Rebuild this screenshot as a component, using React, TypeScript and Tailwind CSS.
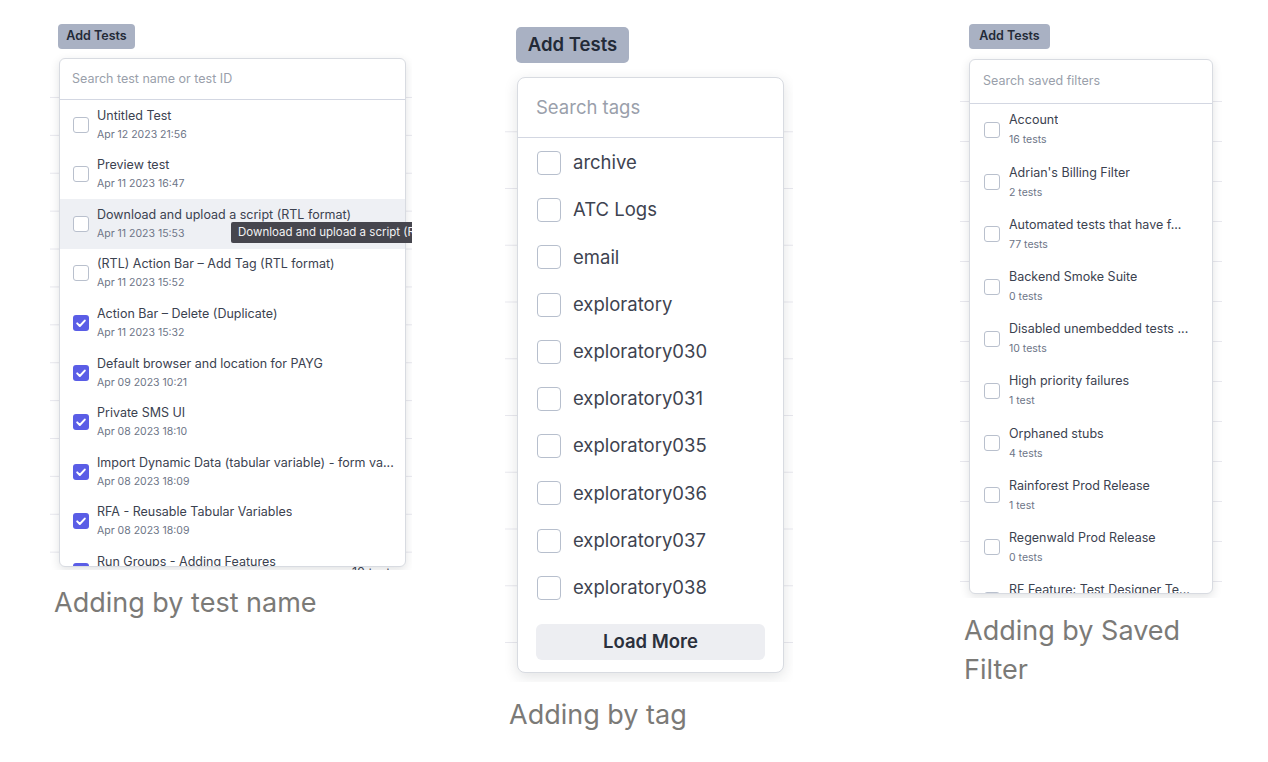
import React from 'react';

// Three screenshots of the "Add Tests" dropdown, each with a caption below.

type TestRow = { title: string; date: string; checked?: boolean; hover?: boolean };

const testRows: TestRow[] = [
  { title: 'Untitled Test', date: 'Apr 12 2023 21:56' },
  { title: 'Preview test', date: 'Apr 11 2023 16:47' },
  { title: 'Download and upload a script (RTL format)', date: 'Apr 11 2023 15:53', hover: true },
  { title: '(RTL) Action Bar – Add Tag (RTL format)', date: 'Apr 11 2023 15:52' },
  { title: 'Action Bar – Delete (Duplicate)', date: 'Apr 11 2023 15:32', checked: true },
  { title: 'Default browser and location for PAYG', date: 'Apr 09 2023 10:21', checked: true },
  { title: 'Private SMS UI', date: 'Apr 08 2023 18:10', checked: true },
  { title: 'Import Dynamic Data (tabular variable) - form va...', date: 'Apr 08 2023 18:09', checked: true },
  { title: 'RFA - Reusable Tabular Variables', date: 'Apr 08 2023 18:09', checked: true },
  { title: 'Run Groups - Adding Features', date: 'Apr 08 2023 18:05', checked: true },
];

const tags = [
  'archive',
  'ATC Logs',
  'email',
  'exploratory',
  'exploratory030',
  'exploratory031',
  'exploratory035',
  'exploratory036',
  'exploratory037',
  'exploratory038',
];

const savedFilters = [
  { title: 'Account', count: '16 tests' },
  { title: "Adrian's Billing Filter", count: '2 tests' },
  { title: 'Automated tests that have f...', count: '77 tests' },
  { title: 'Backend Smoke Suite', count: '0 tests' },
  { title: 'Disabled unembedded tests ...', count: '10 tests' },
  { title: 'High priority failures', count: '1 test' },
  { title: 'Orphaned stubs', count: '4 tests' },
  { title: 'Rainforest Prod Release', count: '1 test' },
  { title: 'Regenwald Prod Release', count: '0 tests' },
  { title: 'RF Feature: Test Designer Te...', count: '3 tests' },
];

function Check() {
  return (
    <svg viewBox="0 0 16 16" className="h-full w-full" fill="none">
      <path d="M4.2 8.4l2.6 2.6 5-5.4" stroke="#fff" strokeWidth="2" strokeLinecap="round" strokeLinejoin="round" />
    </svg>
  );
}

function SmallBox({ checked }: { checked?: boolean }) {
  if (checked) {
    return (
      <div className="h-[16px] w-[16px] shrink-0 rounded-[3px] bg-[#5a5de6]">
        <Check />
      </div>
    );
  }
  return <div className="h-[16px] w-[16px] shrink-0 rounded-[3px] border border-[#b9c0cd] bg-white" />;
}

function Caption({ children }: { children: React.ReactNode }) {
  return <p className="mt-[13px] pl-[4px] text-[27px] leading-[39px] text-[#7b7a77]">{children}</p>;
}

function TestNamePanel() {
  return (
    <div className="relative h-[555px] w-[362px] overflow-hidden bg-white [background-image:linear-gradient(#fff,#fff),linear-gradient(to_bottom,#e8e8ee_1px,transparent_1px)] [background-size:100%_81px,100%_37.9px] [background-position:0_0,0_6.2px] [background-repeat:no-repeat,repeat]">
      <div className="pl-[8px] pt-[7px]">
        <button className="h-[25px] w-[77px] rounded-[4px] bg-[#a9b1c3] text-[12.5px] font-semibold text-[#232a37]">
          Add Tests
        </button>
      </div>

      <div className="ml-[9px] mt-[9px] h-[509px] w-[347px] overflow-hidden rounded-[6px] border border-[#d8dbe1] bg-white shadow-[0_3px_10px_rgba(30,35,50,0.13)]">
        <div className="flex h-[41px] items-center border-b border-[#d3d7e2] pl-[12px] text-[12.5px] text-[#9a9fab]">
          Search test name or test ID
        </div>
        {testRows.map((row) => (
          <div
            key={row.title}
            className={`flex h-[49.6px] items-center gap-[8px] pl-[13px] ${row.hover ? 'bg-[#eef0f4]' : ''}`}
          >
            <SmallBox checked={row.checked} />
            <div className="min-w-0">
              <div className="truncate text-[12.5px] leading-[16px] text-[#3b4250]">{row.title}</div>
              <div className="mt-[4px] text-[10.5px] leading-[14px] text-[#6d7587]">{row.date}</div>
            </div>
          </div>
        ))}
      </div>
      <div className="-mt-[2px] pl-[302px] text-[12.5px] leading-[16px] text-[#3b4250]">10 tests</div>

      {/* hover tooltip, cut off by the screenshot edge */}
      <div className="absolute left-[181px] top-[207px] flex h-[21px] items-center whitespace-nowrap rounded-[2px] bg-[#46464e] px-[7px] text-[11.5px] text-[#f2f2f4]">
        Download and upload a script (RTL format)
      </div>
    </div>
  );
}

function TagPanel() {
  return (
    <div className="h-[662px] w-[288px] overflow-hidden bg-white [background-image:linear-gradient(#fff,#fff),linear-gradient(to_bottom,#e8e8ee_1px,transparent_1px)] [background-size:100%_110px,100%_56.75px] [background-position:0_0,0_54.5px] [background-repeat:no-repeat,repeat]">
      <div className="pl-[11px] pt-[7px]">
        <button className="h-[36px] w-[113px] rounded-[5px] bg-[#a9b1c3] text-[18.5px] font-semibold text-[#232a37]">
          Add Tests
        </button>
      </div>

      <div className="ml-[12px] mt-[14px] h-[596px] w-[267px] overflow-hidden rounded-[8px] border border-[#d8dbe1] bg-white shadow-[0_4px_14px_rgba(30,35,50,0.13)]">
        <div className="flex h-[60px] items-center border-b border-[#d3d7e2] pl-[18px] text-[18.5px] text-[#9a9fab]">
          Search tags
        </div>
        <div className="pt-[1.5px]">
          {tags.map((tag) => (
            <div key={tag} className="flex h-[47.2px] items-center gap-[12px] pl-[19px]">
              <div className="h-[24px] w-[24px] shrink-0 rounded-[4px] border-[1.5px] border-[#b7bfcd] bg-white" />
              <span className="text-[18.5px] text-[#3e4350]">{tag}</span>
            </div>
          ))}
        </div>
        <div className="mx-[18px] mt-[12.5px] flex h-[36px] items-center justify-center rounded-[6px] bg-[#edeef2] text-[18.5px] font-semibold text-[#2b303c]">
          Load More
        </div>
      </div>
    </div>
  );
}

function SavedFilterPanel() {
  return (
    <div className="h-[583px] w-[262px] overflow-hidden bg-white [background-image:linear-gradient(#fff,#fff),linear-gradient(to_bottom,#e8e8ee_1px,transparent_1px)] [background-size:100%_85px,100%_40px] [background-position:0_0,0_6px] [background-repeat:no-repeat,repeat]">
      <div className="pl-[9px] pt-[7px]">
        <button className="h-[25px] w-[81px] rounded-[4px] bg-[#a9b1c3] text-[12.5px] font-semibold text-[#232a37]">
          Add Tests
        </button>
      </div>

      <div className="ml-[9px] mt-[10px] h-[535px] w-[244px] overflow-hidden rounded-[6px] border border-[#d8dbe1] bg-white shadow-[0_3px_10px_rgba(30,35,50,0.13)]">
        <div className="flex h-[44px] items-center border-b border-[#d3d7e2] pl-[13px] text-[12.5px] text-[#9a9fab]">
          Search saved filters
        </div>
        {savedFilters.map((f) => (
          <div key={f.title} className="flex h-[52.2px] items-center gap-[9px] pl-[14px]">
            <SmallBox />
            <div className="min-w-0 pr-[12px]">
              <div className="truncate text-[12.5px] leading-[16px] text-[#3b4250]">{f.title}</div>
              <div className="mt-[5px] text-[10.5px] leading-[14px] text-[#6d7587]">{f.count}</div>
            </div>
          </div>
        ))}
      </div>
    </div>
  );
}

export default function App() {
  return (
    <div className="flex min-h-[762px] bg-white pl-[50px] font-['Inter',sans-serif]">
      <div className="w-[455px] pt-[15px]">
        <TestNamePanel />
        <Caption>Adding by test name</Caption>
      </div>
      <div className="w-[455px] pt-[20px]">
        <TagPanel />
        <Caption>Adding by tag</Caption>
      </div>
      <div className="w-[262px] pt-[15px]">
        <SavedFilterPanel />
        <Caption>Adding by Saved Filter</Caption>
      </div>
    </div>
  );
}
